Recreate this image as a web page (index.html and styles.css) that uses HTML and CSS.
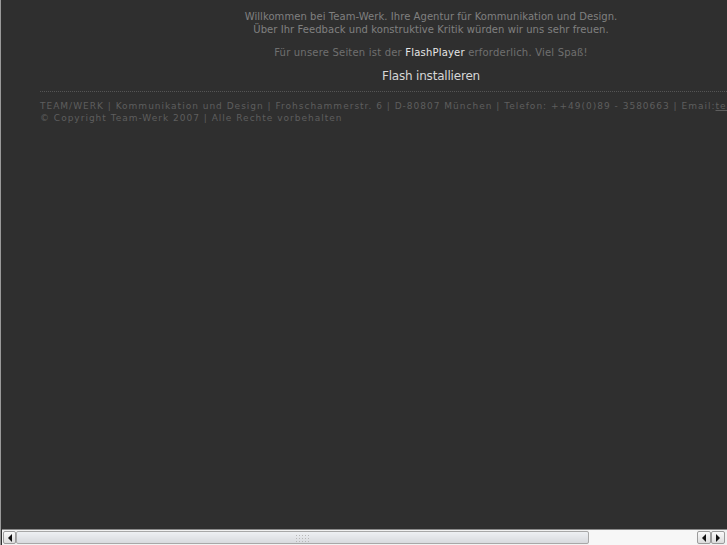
FILE: index.html
```html
<!DOCTYPE html>
<html lang="de">
<head>
<meta charset="utf-8">
<title>Team-Werk</title>
<link rel="stylesheet" href="styles.css">
</head>
<body>
<div class="viewport">
  <div class="page">
    <div class="intro">
      <p class="welcome">Willkommen bei Team-Werk. Ihre Agentur für Kommunikation und Design.<br>Über Ihr Feedback und konstruktive Kritik würden wir uns sehr freuen.</p>
      <p class="notice">Für unsere Seiten ist der <b>FlashPlayer</b> erforderlich. Viel Spaß!</p>
      <p class="install">Flash installieren</p>
    </div>
    <div class="footer">
      <p>TEAM/WERK | Kommunikation und Design | Frohschammerstr. 6 | D-80807 München | Telefon: ++49(0)89 - 3580663 | Email:<a href="#">team@team-werk.de</a></p>
      <p>© Copyright Team-Werk 2007 | Alle Rechte vorbehalten</p>
    </div>
  </div>
</div>
<div class="hscroll">
  <div class="btn btn-left"><span class="arrow-left"></span></div>
  <div class="thumb"><span class="grip"></span></div>
  <div class="trough"></div>
  <div class="btn small"><span class="arrow-left"></span></div>
  <div class="btn small last"><span class="arrow-right"></span></div>
</div>
</body>
</html>
```
FILE: styles.css
```css
html, body {
  margin: 0;
  padding: 0;
  height: 100%;
  overflow: hidden;
  background: #2f2f2f;
}
.viewport {
  height: 100%;
  border-left: 1px solid #9a9a9a;
  box-sizing: border-box;
  overflow: hidden;
}
.page {
  width: 860px;
}
.intro {
  width: 782px;
  margin: 0 auto;
  padding-top: 10px;
  text-align: center;
  font-family: "DejaVu Sans", Verdana, sans-serif;
}
.intro p { margin: 0; }
.welcome {
  font-size: 10px;
  line-height: 13px;
  letter-spacing: 0.06px;
  color: #808080;
}
.notice {
  margin-top: 10px !important;
  font-size: 10px;
  line-height: 13px;
  letter-spacing: 0.2px;
  color: #707070;
}
.notice b {
  font-weight: normal;
  color: #e6e6e6;
}
.install {
  margin-top: 9px !important;
  font-size: 12px;
  line-height: 16px;
  letter-spacing: -0.2px;
  color: #d6d6d6;
}
.footer {
  margin-left: 39px;
  margin-top: 7px;
  border-top: 1px dotted #555;
  padding-top: 8px;
  font-family: "DejaVu Sans", sans-serif;
  font-size: 9px;
  line-height: 12px;
  letter-spacing: 1px;
  color: #5e5e5e;
  white-space: nowrap;
}
.footer p { margin: 0; }
.footer a { color: #5e5e5e; }

.hscroll {
  position: fixed;
  left: 2px;
  right: 0;
  bottom: 0;
  height: 15px;
  display: flex;
  background: #f2f2f2;
  border-top: 1px solid #8a8a8a;
}
.btn {
  width: 13px;
  height: 13px;
  margin-top: 1px;
  border: 1px solid #9c9c9c;
  border-radius: 2px;
  background: linear-gradient(#fafafa, #dcdcdc);
  box-sizing: border-box;
  display: flex;
  align-items: center;
  justify-content: center;
}
.btn-left { margin-left: 1px; }
.small { width: 14px; }
.last { margin-right: 2px; }
.arrow-left {
  width: 0; height: 0;
  border-top: 4px solid transparent;
  border-bottom: 4px solid transparent;
  border-right: 4px solid #111;
}
.arrow-right {
  width: 0; height: 0;
  border-top: 4px solid transparent;
  border-bottom: 4px solid transparent;
  border-left: 4px solid #111;
}
.thumb {
  width: 573px;
  height: 13px;
  margin-top: 1px;
  border: 1px solid #a8a8a8;
  border-radius: 2px;
  box-sizing: border-box;
  background: linear-gradient(#eef0f3, #d8dade);
  display: flex;
  align-items: center;
  justify-content: center;
}
.grip {
  width: 16px;
  height: 8px;
  background-image: radial-gradient(circle, #b8b8b8 0.8px, transparent 1px);
  background-size: 3px 3px;
}
.trough {
  flex: 1;
  background: #f7f7f7;
}
```
